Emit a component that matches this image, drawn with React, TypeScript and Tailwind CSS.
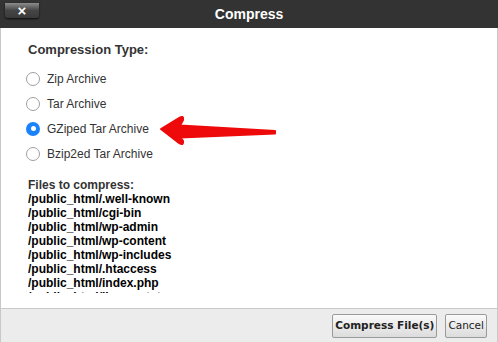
import React from "react";

const files = [
  "/public_html/.well-known",
  "/public_html/cgi-bin",
  "/public_html/wp-admin",
  "/public_html/wp-content",
  "/public_html/wp-includes",
  "/public_html/.htaccess",
  "/public_html/index.php",
  "/public_html/license.txt",
  "/public_html/readme.html",
];

const options = ["Zip Archive", "Tar Archive", "GZiped Tar Archive", "Bzip2ed Tar Archive"];

function Radio({ checked }: { checked: boolean }) {
  return checked ? (
    <span className="w-[14px] h-[14px] rounded-full bg-[#1a82fb] flex items-center justify-center">
      <span className="w-[5px] h-[5px] rounded-full bg-white" />
    </span>
  ) : (
    <span className="w-[14px] h-[14px] rounded-full border border-[#9f9f9f] bg-white" />
  );
}

export default function App() {
  return (
    <div
      className="w-[498px] h-[342px] flex flex-col bg-white relative overflow-hidden"
      style={{ fontFamily: '"Liberation Sans", Arial, sans-serif' }}
    >
      <div className="h-[28px] bg-[#333333] flex items-center relative shrink-0">
        <div className="absolute left-[5px] top-[3px] w-[34px] h-[15px] rounded-b-[3px] bg-gradient-to-b from-[#8d8d8d] via-[#454545] to-[#3a3a3a] shadow-[0_1px_2px_rgba(0,0,0,0.8)] flex items-center justify-center">
          <span className="text-white text-[15px] font-bold leading-none mt-[-1px]">×</span>
        </div>
        <div className="flex-1 text-center text-white font-bold text-[14px]">Compress</div>
      </div>
      <div className="flex-1 border-l border-r border-[#c8c8c8] pl-[25px] pt-[14px] pb-[15px] flex flex-col min-h-0">
        <div className="ml-[2px] text-[13px] font-bold text-[#333] leading-[16px]">Compression Type:</div>
        <div className="mt-[8px] flex flex-col">
          {options.map((o, i) => (
            <div key={o} className="h-[25px] flex items-center">
              <Radio checked={i === 2} />
              <span className="ml-[7px] text-[12px] text-[#333]">{o}</span>
            </div>
          ))}
        </div>
        <div className="ml-[2px] mt-[12px] text-[12px] font-bold text-[#333] leading-[14px]">Files to compress:</div>
        <div className="ml-[2px] flex-1 overflow-hidden min-h-0">
          {files.map((f) => (
            <div key={f} className="text-[12px] font-bold text-black leading-[14px]">
              {f}
            </div>
          ))}
        </div>
      </div>
      <div className="h-[34px] bg-[#ececec] border-t border-[#c8c8c8] border-l border-r shrink-0 flex items-center justify-end pr-[10px] gap-[8px]">
        <button
          className="h-[24px] px-[2px] border border-[#9a9a9a] rounded-[2px] bg-gradient-to-b from-[#fafafa] to-[#dcdcdc] text-[10.5px] font-bold text-[#222]"
          style={{ fontFamily: '"DejaVu Sans", Verdana, sans-serif' }}
        >
          Compress File(s)
        </button>
        <button
          className="h-[24px] px-[2px] border border-[#9a9a9a] rounded-[2px] bg-gradient-to-b from-[#fafafa] to-[#dcdcdc] text-[10.5px] text-[#222]"
          style={{ fontFamily: '"DejaVu Sans", Verdana, sans-serif' }}
        >
          Cancel
        </button>
      </div>
      <svg className="absolute left-0 top-0 pointer-events-none" width="498" height="342">
        <path
          d="M161,129 L179,118 Q184,115 183,120 L180,125.5 L275,131 L275,133.5 L180,137.5 L183,141 Q184,146 179,143 Z"
          fill="#ee0a0a"
          stroke="#ee0a0a"
          strokeWidth="2"
          strokeLinejoin="round"
        />
      </svg>
    </div>
  );
}
